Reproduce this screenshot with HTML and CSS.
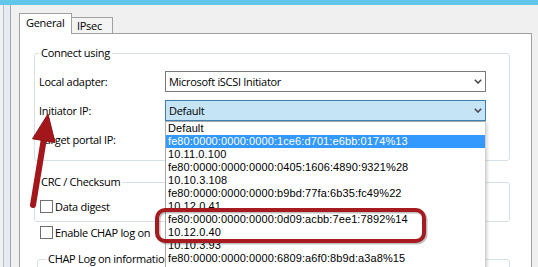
FILE: index.html
```html
<!DOCTYPE html>
<html lang="en">
<head>
    <meta charset="UTF-8">
    <meta name="viewport" content="width=device-width, initial-scale=1.0">
    <title>iSCSI Connect</title>
    <link rel="stylesheet" href="styles.css">
</head>
<body>
    <div class="topbar"></div>
    <div class="window">
        <div class="edge"></div>
        <div class="dialog">
            <div class="tabs">
                <div class="tab active">General</div>
                <div class="tab ipsec">IPsec</div>
            </div>
            <div class="panel">
                <fieldset class="group connect">
                    <legend>Connect using</legend>
                    <div class="row">
                        <label>Local adapter:</label>
                        <div class="combo">
                            <span>Microsoft iSCSI Initiator</span>
                            <svg class="chevron" width="8" height="5" viewBox="0 0 8 5"><path d="M0.8 0.8 L4 4 L7.2 0.8" /></svg>
                        </div>
                    </div>
                    <div class="row">
                        <label>Initiator IP:</label>
                        <div class="combo focus">
                            <span>Default</span>
                            <svg class="chevron" width="8" height="5" viewBox="0 0 8 5"><path d="M0.8 0.8 L4 4 L7.2 0.8" /></svg>
                        </div>
                    </div>
                    <div class="row">
                        <label>Target portal IP:</label>
                        <div class="combo"></div>
                    </div>
                </fieldset>

                <fieldset class="group crc">
                    <legend>CRC / Checksum</legend>
                    <label class="check"><span class="box"></span>Data digest</label>
                </fieldset>

                <label class="check chap"><span class="box"></span>Enable CHAP log on</label>

                <fieldset class="group chapinfo">
                    <legend>CHAP Log on information</legend>
                </fieldset>
            </div>
        </div>
    </div>

    <!-- open dropdown of the Initiator IP combo -->
    <ul class="droplist">
        <li>Default</li>
        <li class="selected">fe80:0000:0000:0000:1ce6:d701:e6bb:0174%13</li>
        <li>10.11.0.100</li>
        <li>fe80:0000:0000:0000:0405:1606:4890:9321%28</li>
        <li>10.10.3.108</li>
        <li>fe80:0000:0000:0000:b9bd:77fa:6b35:fc49%22</li>
        <li>10.12.0.41</li>
        <li>fe80:0000:0000:0000:0d09:acbb:7ee1:7892%14</li>
        <li>10.12.0.40</li>
        <li>10.10.3.93</li>
        <li>fe80:0000:0000:0000:6809:a6f0:8b9d:a3a8%15</li>
    </ul>

    <!-- annotation: arrow and highlight box -->
    <svg class="annot" width="538" height="267" viewBox="0 0 538 267">
        <rect class="hl-shadow" x="158.5" y="211.5" width="267" height="31" rx="8" />
        <rect class="hl" x="157" y="210" width="267" height="31" rx="8" />
        <line class="shaft" x1="43.7" y1="140" x2="33" y2="205" />
        <polygon class="head" points="48,114 55,142.5 32.5,138.8" />
    </svg>
</body>
</html>
```

FILE: styles.css
```css
body {
    margin: 0;
    width: 538px;
    height: 267px;
    overflow: hidden;
    position: relative;
    background: #f0f0f0;
    font-family: "Open Sans", sans-serif;
    font-size: 11px;
    letter-spacing: -0.3px;
    color: #000;
}
.topbar {
    height: 5px;
    background: #62c6ea;
}
.window {
    display: flex;
    height: 262px;
    overflow: hidden;
}
.edge {
    width: 10px;
    border-right: 1px solid #a3a7ab;
    background: #e6edf2;
    box-shadow: inset 3px 0 0 #eef2f5, inset 4px 0 0 #b9bfc4;
}
.dialog {
    padding: 8px 0 0 8px;
}
.tabs {
    display: flex;
    align-items: flex-end;
    margin-bottom: -1px;
    position: relative;
    z-index: 1;
}
.tab {
    border: 1px solid #a0a0a0;
    border-bottom: none;
}
.tab.active {
    width: 45px;
    height: 20px;
    line-height: 18px;
    padding-left: 6px;
    background: #fff;
}
.tab.ipsec {
    width: 35px;
    height: 15px;
    line-height: 15px;
    padding-left: 5px;
    border-left: none;
    margin-bottom: 1px;
    background: #f4f4f4;
}
.panel {
    width: 513px;
    height: 234px;
    box-sizing: border-box;
    overflow: hidden;
    background: #fff;
    border: 1px solid #a0a0a0;
    border-bottom: none;
    padding: 12px 21px 0 14px;
}
.group {
    margin: 0;
    border: 1px solid #d5dfe5;
    border-radius: 3px;
    padding: 11px 23px 10px 4px;
}
.group legend {
    padding: 0 2px;
    line-height: 14px;
}
.row {
    display: flex;
    align-items: center;
    height: 21px;
}
.row + .row {
    margin-top: 8px;
}
.row label {
    width: 126px;
}
.combo {
    width: 321px;
    height: 21px;
    box-sizing: border-box;
    border: 1px solid #7a7a7a;
    background: #fff;
    display: flex;
    align-items: center;
    justify-content: space-between;
    padding: 0 3px;
}
.combo.focus {
    border-color: #3c7fb1;
    background: #c5e4f6;
}
.chevron path {
    fill: none;
    stroke: #4a4a4a;
    stroke-width: 1.6;
}
.crc {
    margin-top: 14px;
    padding: 11px 4px 8px 4px;
}
.check {
    display: flex;
    align-items: center;
    height: 13px;
}
.box {
    width: 13px;
    height: 13px;
    box-sizing: border-box;
    border: 1px solid #707070;
    background: #fff;
    margin: 0 2px 0 1px;
}
.chap {
    margin-top: 4px;
    padding-left: 5px;
}
.chapinfo {
    margin: 13px 0 0 3px;
    padding: 10px 8px 4px 8px;
}
.droplist {
    position: absolute;
    left: 165px;
    top: 121px;
    width: 321px;
    height: 146px;
    box-sizing: border-box;
    margin: 0;
    padding: 0;
    list-style: none;
    overflow: hidden;
    background: #fff;
    border: 1px solid #a9a9a9;
    border-bottom: none;
    border-right-color: #cfcfcf;
    box-shadow: 2px 2px 2px rgba(0, 0, 0, 0.12);
    font-family: "Liberation Sans", Arial, sans-serif;
    font-size: 11px;
    letter-spacing: 0.1px;
}
.droplist li {
    height: 13px;
    line-height: 13px;
    padding-left: 2px;
    white-space: nowrap;
}
.droplist li.selected {
    background: #3399ff;
    color: #fff;
}
.annot {
    position: absolute;
    left: 0;
    top: 0;
    pointer-events: none;
}
.hl {
    fill: none;
    stroke: #a51b20;
    stroke-width: 4;
}
.hl-shadow {
    fill: none;
    stroke: rgba(0, 0, 0, 0.25);
    stroke-width: 4;
}
.shaft {
    stroke: #a3161b;
    stroke-width: 6;
    stroke-linecap: round;
}
.head {
    fill: #a3161b;
    stroke: #8a1216;
    stroke-width: 1;
    stroke-linejoin: round;
}
```
